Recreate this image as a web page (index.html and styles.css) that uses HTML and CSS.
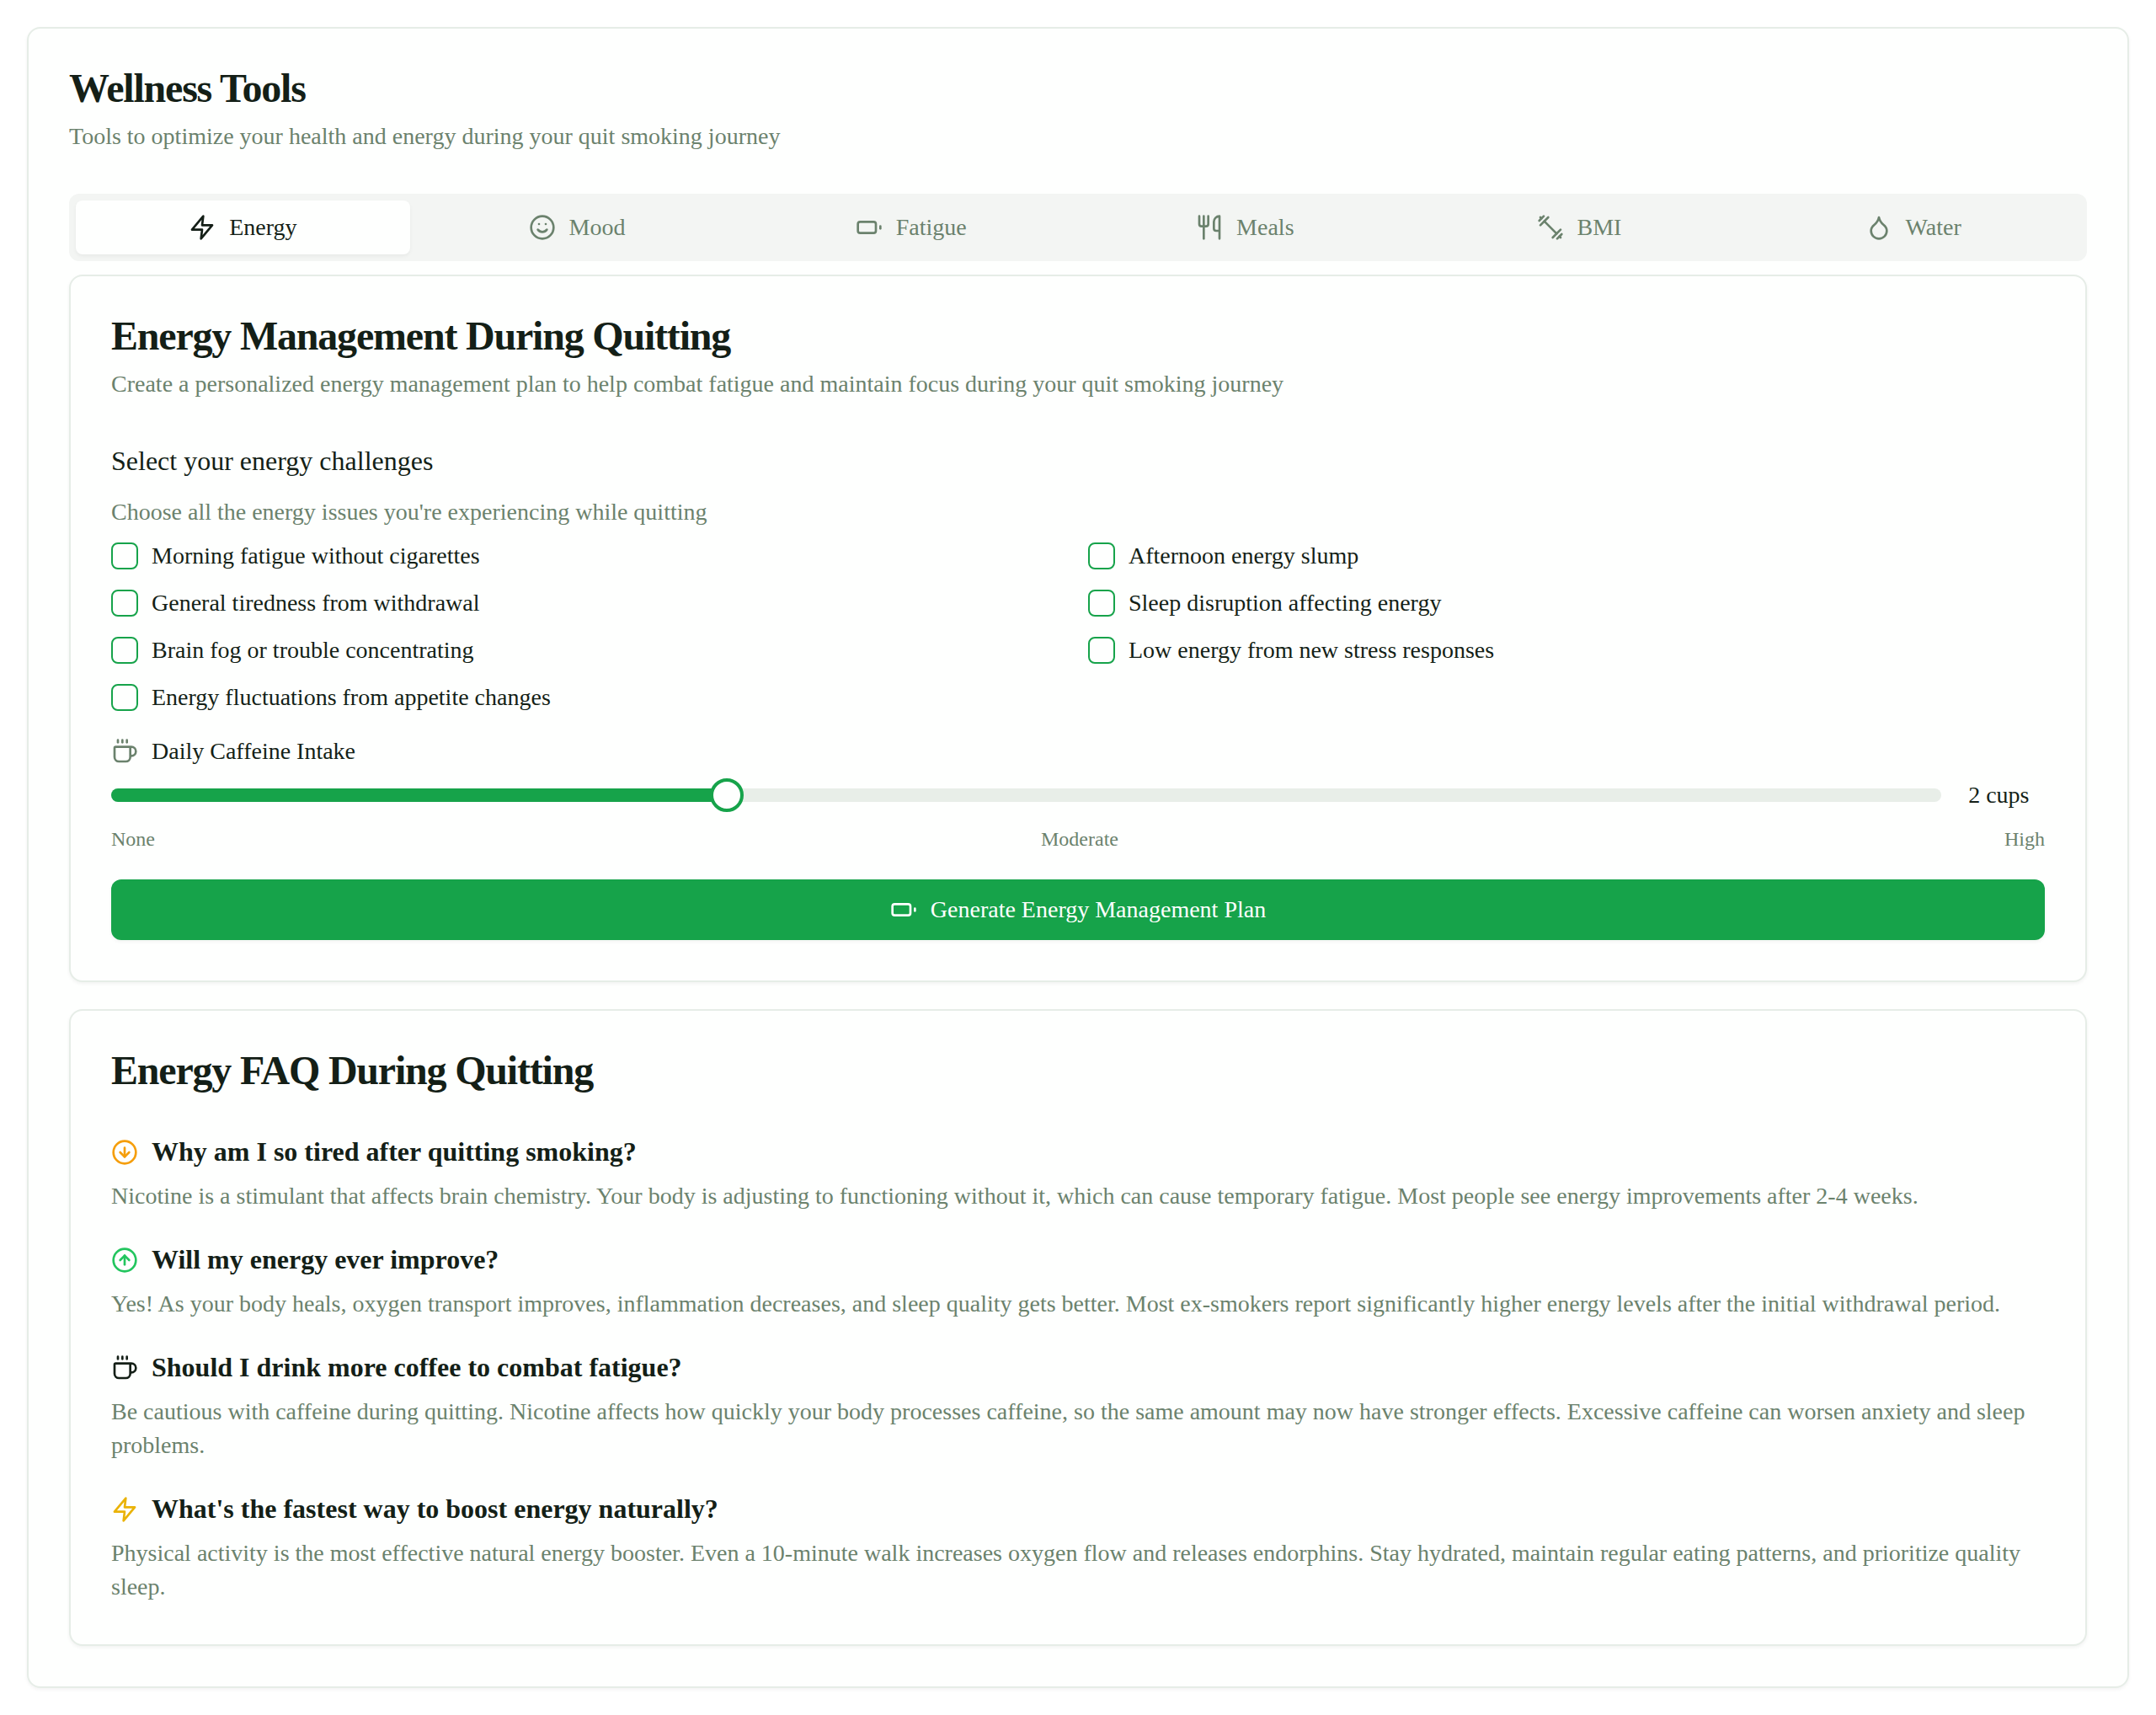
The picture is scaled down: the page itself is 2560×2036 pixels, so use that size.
FILE: index.html
```html
<!DOCTYPE html>
<html lang="en">
<head>
<meta charset="utf-8">
<title>Wellness Tools</title>
<link rel="stylesheet" href="styles.css">
</head>
<body>
<svg class="sprite" aria-hidden="true">
  <symbol id="zap" viewBox="0 0 24 24"><polygon points="13 2 3 14 12 14 11 22 21 10 12 10 13 2"/></symbol>
  <symbol id="smile" viewBox="0 0 24 24"><circle cx="12" cy="12" r="10"/><path d="M8 14s1.500 2 4 2 4-2 4-2"/><path d="M9 9h.01"/><path d="M15 9h.01"/></symbol>
  <symbol id="battery" viewBox="0 0 24 24"><rect width="16" height="10" x="2" y="7" rx="2" ry="2"/><path d="M22 11v2"/></symbol>
  <symbol id="utensils" viewBox="0 0 24 24"><path d="M3 2v7c0 1.100.9 2 2 2h4a2 2 0 0 0 2-2V2"/><path d="M7 2v20"/><path d="M21 15V2a5 5 0 0 0-5 5v6c0 1.100.9 2 2 2h3Zm0 0v7"/></symbol>
  <symbol id="dumbbell" viewBox="0 0 24 24"><path d="m6.500 6.500 11 11"/><path d="m21 21-1-1"/><path d="m3 3 1 1"/><path d="m18 22 4-4"/><path d="m2 6 4-4"/><path d="m3 10 7-7"/><path d="m14 21 7-7"/></symbol>
  <symbol id="droplet" viewBox="0 0 24 24"><path d="M12 22a7 7 0 0 0 7-7c0-2-1-3.900-3-5.500s-3.500-4-4-6.500c-.5 2.500-2 4.900-4 6.500C6 11.100 5 13 5 15a7 7 0 0 0 7 7z"/></symbol>
  <symbol id="coffee" viewBox="0 0 24 24"><path d="M10 2v2"/><path d="M14 2v2"/><path d="M6 2v2"/><path d="M16 8a1 1 0 0 1 1 1v8a4 4 0 0 1-4 4H7a4 4 0 0 1-4-4V9a1 1 0 0 1 1-1h14a4 4 0 1 1 0 8h-1"/></symbol>
  <symbol id="arrow-down" viewBox="0 0 24 24"><circle cx="12" cy="12" r="10"/><path d="M12 8v8"/><path d="m8 12 4 4 4-4"/></symbol>
  <symbol id="arrow-up" viewBox="0 0 24 24"><circle cx="12" cy="12" r="10"/><path d="m16 12-4-4-4 4"/><path d="M12 16V8"/></symbol>
</svg>

<main class="card">
  <header class="card-header">
    <h1 class="title">Wellness Tools</h1>
    <p class="muted">Tools to optimize your health and energy during your quit smoking journey</p>
  </header>

  <nav class="tabs">
    <button class="tab active"><svg class="icon"><use href="#zap"/></svg>Energy</button>
    <button class="tab"><svg class="icon"><use href="#smile"/></svg>Mood</button>
    <button class="tab"><svg class="icon"><use href="#battery"/></svg>Fatigue</button>
    <button class="tab"><svg class="icon"><use href="#utensils"/></svg>Meals</button>
    <button class="tab"><svg class="icon"><use href="#dumbbell"/></svg>BMI</button>
    <button class="tab"><svg class="icon"><use href="#droplet"/></svg>Water</button>
  </nav>

  <div class="panel">
    <section class="card">
      <header class="card-header">
        <h2 class="title">Energy Management During Quitting</h2>
        <p class="muted">Create a personalized energy management plan to help combat fatigue and maintain focus during your quit smoking journey</p>
      </header>
      <div class="form">
        <div class="field">
          <h3 class="legend">Select your energy challenges</h3>
          <p class="muted">Choose all the energy issues you're experiencing while quitting</p>
          <div class="options">
            <label class="option"><span class="checkbox"></span>Morning fatigue without cigarettes</label>
            <label class="option"><span class="checkbox"></span>Afternoon energy slump</label>
            <label class="option"><span class="checkbox"></span>General tiredness from withdrawal</label>
            <label class="option"><span class="checkbox"></span>Sleep disruption affecting energy</label>
            <label class="option"><span class="checkbox"></span>Brain fog or trouble concentrating</label>
            <label class="option"><span class="checkbox"></span>Low energy from new stress responses</label>
            <label class="option"><span class="checkbox"></span>Energy fluctuations from appetite changes</label>
          </div>
        </div>
        <div class="field">
          <div class="option"><svg class="icon subtle"><use href="#coffee"/></svg>Daily Caffeine Intake</div>
          <div class="slider-row">
            <div class="slider">
              <div class="track"><div class="range"></div></div>
              <span class="thumb"></span>
            </div>
            <span class="value">2 cups</span>
          </div>
          <div class="scale"><span>None</span><span>Moderate</span><span>High</span></div>
        </div>
        <button class="submit"><svg class="icon"><use href="#battery"/></svg>Generate Energy Management Plan</button>
      </div>
    </section>

    <section class="card">
      <header class="card-header">
        <h2 class="title">Energy FAQ During Quitting</h2>
      </header>
      <div class="faq">
        <article class="entry">
          <h3 class="question"><svg class="icon amber"><use href="#arrow-down"/></svg><span class="question-text">Why am I so tired after quitting smoking?</span></h3>
          <p class="muted">Nicotine is a stimulant that affects brain chemistry. Your body is adjusting to functioning without it, which can cause temporary fatigue. Most people see energy improvements after 2-4 weeks.</p>
        </article>
        <article class="entry">
          <h3 class="question"><svg class="icon green"><use href="#arrow-up"/></svg><span class="question-text">Will my energy ever improve?</span></h3>
          <p class="muted">Yes! As your body heals, oxygen transport improves, inflammation decreases, and sleep quality gets better. Most ex-smokers report significantly higher energy levels after the initial withdrawal period.</p>
        </article>
        <article class="entry">
          <h3 class="question"><svg class="icon"><use href="#coffee"/></svg><span class="question-text">Should I drink more coffee to combat fatigue?</span></h3>
          <p class="muted">Be cautious with caffeine during quitting. Nicotine affects how quickly your body processes caffeine, so the same amount may now have stronger effects. Excessive caffeine can worsen anxiety and sleep problems.</p>
        </article>
        <article class="entry">
          <h3 class="question"><svg class="icon yellow"><use href="#zap"/></svg><span class="question-text">What's the fastest way to boost energy naturally?</span></h3>
          <p class="muted">Physical activity is the most effective natural energy booster. Even a 10-minute walk increases oxygen flow and releases endorphins. Stay hydrated, maintain regular eating patterns, and prioritize quality sleep.</p>
        </article>
      </div>
    </section>
  </div>
</main>
</body>
</html>
```
FILE: styles.css
```css
:root {
  --background: #fefffe;
  --foreground: #141f17;
  --muted: #f3f5f3;
  --muted-foreground: #6b826d;
  --border: #e6ede7;
  --primary: #16a34a;
  --shadow: 0 2px 4px rgba(0, 0, 0, 0.05);
}

* { box-sizing: border-box; }

body {
  margin: 0;
  padding: 32px;
  background: #fff;
  color: var(--foreground);
  font: 28px/40px "Liberation Serif", "Times New Roman", serif;
}

h1, h2, h3, p { margin: 0; }

button {
  border: 0;
  padding: 0;
  font: inherit;
  color: inherit;
}

.sprite { display: none; }

.icon {
  width: 32px;
  height: 32px;
  flex: none;
  fill: none;
  stroke: currentColor;
  stroke-width: 2;
  stroke-linecap: round;
  stroke-linejoin: round;
}

.subtle { color: var(--muted-foreground); }
.amber { color: #f59e0b; }
.green { color: #22c55e; }
.yellow { color: #eab308; }

.card {
  padding: 48px;
  border: 2px solid var(--border);
  border-radius: 16px;
  background: var(--background);
  box-shadow: var(--shadow);
}

.card-header {
  display: flex;
  flex-direction: column;
  gap: 12px;
  padding-bottom: 48px;
}

.title {
  padding-bottom: 3px;
  font-size: 48px;
  line-height: 45px;
  font-weight: 600;
  letter-spacing: -1.2px;
}

.muted { color: var(--muted-foreground); }

.tabs {
  display: grid;
  grid-template-columns: repeat(6, 1fr);
  padding: 8px;
  height: 80px;
  border-radius: 12px;
  background: var(--muted);
  color: var(--muted-foreground);
}

.tab {
  display: flex;
  align-items: center;
  justify-content: center;
  gap: 16px;
  border-radius: 8px;
  background: none;
}

.tab.active {
  background: var(--background);
  color: var(--foreground);
  box-shadow: var(--shadow);
}

.panel {
  display: flex;
  flex-direction: column;
  gap: 32px;
  margin-top: 16px;
}

.form {
  display: flex;
  flex-direction: column;
  gap: 32px;
}

.field {
  display: flex;
  flex-direction: column;
  gap: 16px;
}

.legend {
  padding-bottom: 2px;
  font-size: 32px;
  line-height: 46px;
  font-weight: 400;
}

.options {
  display: grid;
  grid-template-columns: 1fr 1fr;
  gap: 24px;
}

.option {
  display: flex;
  align-items: center;
  gap: 16px;
  height: 32px;
  line-height: 28px;
}

.checkbox {
  width: 32px;
  height: 32px;
  border: 2px solid var(--primary);
  border-radius: 8px;
}

.slider-row {
  display: flex;
  align-items: center;
  gap: 32px;
}

.slider {
  position: relative;
  display: flex;
  align-items: center;
  width: 100%;
  height: 40px;
}

.track {
  flex: 1;
  height: 16px;
  border-radius: 8px;
  background: #e8eee8;
  overflow: hidden;
}

.range {
  width: 33.333%;
  height: 100%;
  background: var(--primary);
}

.thumb {
  position: absolute;
  left: calc(33.333% + 6.67px);
  width: 40px;
  height: 40px;
  margin-left: -20px;
  border: 4px solid var(--primary);
  border-radius: 50%;
  background: var(--background);
}

.value {
  width: 96px;
  white-space: nowrap;
}

.scale {
  display: flex;
  justify-content: space-between;
  font-size: 24px;
  line-height: 32px;
  color: var(--muted-foreground);
}

.submit {
  display: flex;
  align-items: center;
  justify-content: center;
  gap: 16px;
  height: 72px;
  border-radius: 12px;
  background: var(--primary);
  color: #fff;
  box-shadow: var(--shadow);
}

.faq {
  display: flex;
  flex-direction: column;
  gap: 32px;
}

.entry {
  display: flex;
  flex-direction: column;
  gap: 8px;
}

.question {
  display: flex;
  align-items: center;
  gap: 16px;
  font-size: 32px;
  line-height: 46px;
  font-weight: 600;
}

.question-text { padding-bottom: 2px; }
```
